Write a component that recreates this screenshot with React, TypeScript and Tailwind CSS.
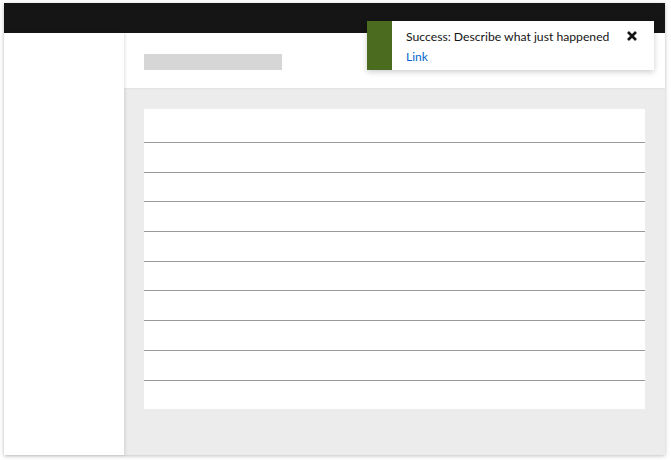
import React from 'react';

const rows = Array.from({ length: 9 });

const App = () => {
  return (
    <div className="w-[671px] h-[460px] bg-white pt-[3px] pl-[4px]" style={{ fontFamily: 'Lato, "Open Sans", "Liberation Sans", sans-serif' }}>
      <div className="relative w-[661px] h-[452px] flex flex-col bg-[#ececec] shadow-[0_1px_4px_rgba(0,0,0,0.25)]">
        <div className="h-[30px] bg-[#151515] shrink-0" />
        <div className="flex flex-1 min-h-0">
          <div className="w-[120px] bg-white shrink-0 z-10 shadow-[1px_0_3px_rgba(0,0,0,0.12)]" />
          <div className="flex-1 flex flex-col">
            <div className="h-[55px] bg-white pt-[21px] pl-[20px] shadow-[0_1px_2px_rgba(0,0,0,0.05)]">
              <div className="w-[138px] h-[16px] bg-[#d6d6d6]" />
            </div>
            <div className="px-[20px] pt-[21px]">
              <div className="bg-white pt-[33px]">
                {rows.map((_, i) => (
                  <div key={i} className="h-[29.7px] border-t border-[#999999]" />
                ))}
              </div>
            </div>
          </div>
        </div>

        <div className="absolute left-[363px] top-[18px] w-[287px] h-[49px] flex bg-white shadow-[0_2px_6px_rgba(0,0,0,0.2)]">
          <div className="w-[25px] bg-[#4b6c1e]" />
          <div className="flex-1 pl-[14px] pt-[7px]">
            <div className="text-[12.2px] leading-[18px] text-[#151515]">Success: Describe what just happened</div>
            <div className="text-[12px] leading-[18px] mt-[2px] text-[#0066cc]">Link</div>
          </div>
          <button className="absolute right-[16px] top-[9px] w-[12px] h-[12px]">
            <svg viewBox="0 0 12 12" width="12" height="12">
              <path d="M2 2 L10 10 M10 2 L2 10" stroke="#151515" strokeWidth="2.6" strokeLinecap="butt" />
            </svg>
          </button>
        </div>
      </div>
    </div>
  );
};

export default App;
